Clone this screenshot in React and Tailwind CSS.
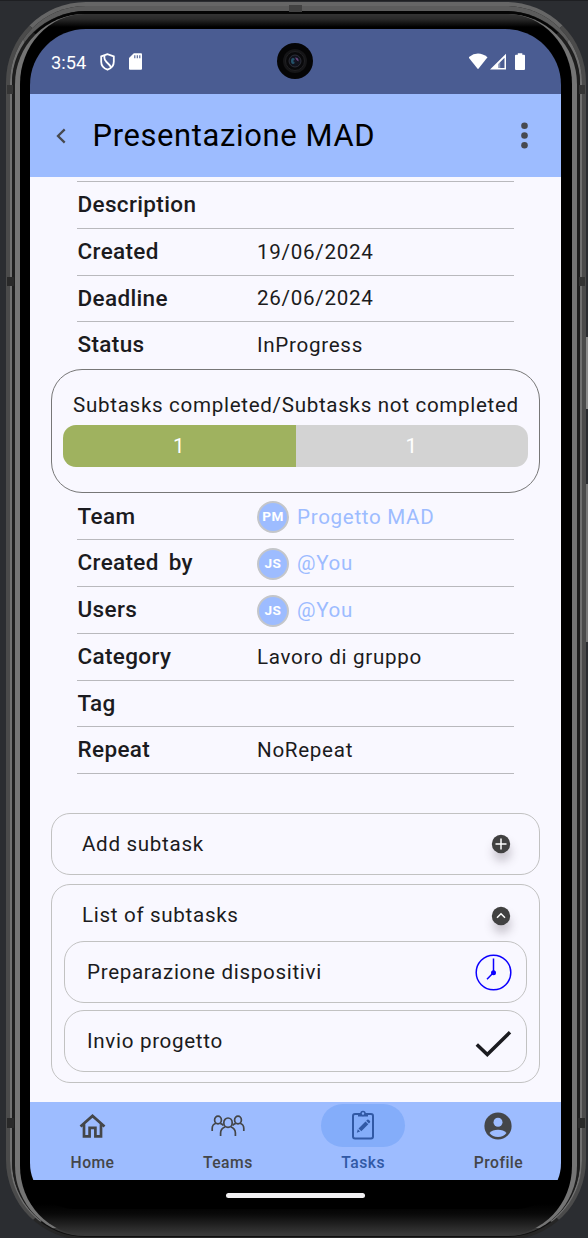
const ROBOTO = "font-['Roboto','Noto_Sans',sans-serif]";

function Avatar({ text }) {
  return (
    <span className="flex h-8 w-8 shrink-0 items-center justify-center rounded-full border-2 border-[#c4c6ca] bg-[#9dbcff] text-[13.6px] font-bold leading-none tracking-[0.5px] text-white">
      {text}
    </span>
  );
}

function Row({ label, value, avatar, last }) {
  return (
    <div className={`flex h-[46.75px] items-center border-b ${last ? 'border-transparent' : 'border-[#b9b9bd]'}`}>
      <div className="w-[180px] shrink-0 pl-[0.5px] text-[22.5px] font-medium tracking-[0.35px] text-[#1b1b20] [word-spacing:4px]">{label}</div>
      {avatar ? (
        <div className="flex items-center gap-[8px] pt-[1.5px] text-[20.6px] tracking-[0.68px] text-[#9dbcff]">
          <Avatar text={avatar} />
          <span>{value}</span>
        </div>
      ) : (
        <div className="pt-[1px] text-[20.6px] tracking-[0.7px] text-[#1b1b20]">{value}</div>
      )}
    </div>
  );
}

function StatusBar() {
  return (
    <div className="flex h-[65px] shrink-0 items-center bg-[#4a5c92] pl-[21px] pr-[36px] text-white">
      <span className="w-[49px] pt-[2px] text-[18.3px]">3:54</span>
      <svg className="h-[18px] w-[15px]" viewBox="0 0 15 18" fill="none" stroke="white" strokeWidth="1.8">
        <path d="M7.5 1.2 1.2 3.5v5.2c0 3.700 2.600 6.600 6.300 8 3.700-1.400 6.300-4.300 6.300-8V3.500Z" />
        <path d="M4.400 2.500v2.500c0 1.600.8 2.700 2.100 4l3 3c1 1 1.300 1.700 1.300 3" />
      </svg>
      <svg className="ml-[14px] h-[17px] w-[13px]" viewBox="0 0 13 17">
        <path fill="white" d="M4.800.2H12q1 0 1 1v14.500q0 1-1 1H1q-1 0-1-1V5Z" />
        <path stroke="#4a5c92" strokeWidth="1.100" d="M5.800 2.200v3M8.300 2.200v3M10.800 2.200v3" />
      </svg>
      <div className="flex flex-1 justify-center pb-[1px] pr-[21px]">
        <div className="flex h-[36px] w-[36px] items-center justify-center rounded-full bg-[#050506]">
          <svg className="h-[28px] w-[28px]" viewBox="0 0 28 28">
            <circle cx="14" cy="14" r="12" fill="#151517" />
            <circle cx="14" cy="14" r="9.500" fill="#09090b" stroke="#202023" />
            <circle cx="14" cy="14" r="6" fill="#11131d" stroke="#343640" strokeWidth=".8" />
            <ellipse cx="12" cy="14" rx="2" ry="3" fill="#24536a" />
            <path d="M14 10.500q4 0 3.500 4l-2-1.500Z" fill="#69447d" />
            <circle cx="14" cy="14" r="1.600" fill="#171628" />
          </svg>
        </div>
      </div>
      <svg className="h-[18px] w-[56px]" viewBox="0 0 56 18" fill="white">
        <path d="M-.5 4.300Q9-3.200 18.500 4.300L9 16.300Z" />
        <path fillRule="evenodd" d="M37 .8V16.600H21ZM35.500 4.800 29.300 11v4.100h6.200Z" />
        <path d="M29.300 9.500h2v5.600h-2z" opacity=".35" />
        <path d="M48.800.2h4.500v1.500h1.700q1 0 1 1v13.400q0 1-1 1h-8q-1 0-1-1V2.700q0-1 1-1h1.800Z" />
      </svg>
    </div>
  );
}

function Header() {
  return (
    <header className="flex h-[83px] shrink-0 items-center bg-[#9dbcff] pl-[26px] pr-[33px]">
      <svg className="h-[16px] w-[10px]" viewBox="0 0 10 16" fill="none" stroke="#47494f" strokeWidth="2.300">
        <path d="M8.700 1.400 2 8l6.700 6.600" />
      </svg>
      <h1 className="ml-[26.5px] flex-1 pt-[2px] text-[30.900px] tracking-[0.650px] text-black">Presentazione MAD</h1>
      <svg className="h-[27px] w-[7px]" viewBox="0 0 7 27" fill="#47494f">
        <circle cx="3.500" cy="3.700" r="3.300" />
        <circle cx="3.500" cy="13.500" r="3.300" />
        <circle cx="3.500" cy="23.200" r="3.300" />
      </svg>
    </header>
  );
}

function RoundIcon({ children }) {
  return (
    <svg
      className="h-[18px] w-[18px] overflow-visible drop-shadow-[1px_8px_5px_rgba(30,20,30,0.220)]"
      viewBox="0 0 18 18"
      fill="none"
      stroke="white"
      strokeWidth="1.500"
    >
      <circle cx="9" cy="9" r="9.200" fill="#414141" stroke="none" />
      {children}
    </svg>
  );
}

function NavItem({ label, active, children }) {
  return (
    <div className={`flex w-[125px] flex-col items-center ${active ? 'text-[#3159a5]' : 'text-[#444649]'}`}>
      <div className={`mt-[2px] flex h-[43px] w-[84px] items-center justify-center rounded-full ${active ? 'bg-[#84adfa] pb-[2px]' : ''}`}>
        {children}
      </div>
      <span className="mt-[5px] text-[15.700px] font-medium leading-[22px] tracking-[0.450px]">{label}</span>
    </div>
  );
}

function BottomNav() {
  return (
    <nav className="flex h-[78px] shrink-0 justify-between bg-[#9dbcff]">
      <NavItem label="Home">
        <svg className="h-[24px] w-[27px]" viewBox="0 0 27 24" fill="none" stroke="currentColor" strokeWidth="2.700">
          <path d="M1.500 12.400 13.500 1.900l12 10.500M5 10v12.300h5.600v-8.500h5.800v8.500H22V10" />
        </svg>
      </NavItem>
      <NavItem label="Teams">
        <svg className="h-[22px] w-[34px]" viewBox="0 0 34 22" fill="none" stroke="currentColor" strokeWidth="1.700">
          <ellipse cx="7" cy="5" rx="3.400" ry="3.900" />
          <ellipse cx="27" cy="5" rx="3.400" ry="3.900" />
          <ellipse cx="17" cy="7.700" rx="4.200" ry="4.700" />
          <path d="M1.200 16v-2.500q0-4 3.700-5.200M9.200 8.300q2.200.5 3.300 2.200M32.800 16v-2.500q0-4-3.700-5.200M24.800 8.300q-2.200.5-3.300 2.200M9.600 21v-3q0-4.500 4.700-6.300M24.400 21v-3q0-4.500-4.700-6.300" />
        </svg>
      </NavItem>
      <NavItem label="Tasks" active>
        <svg className="h-[30px] w-[24px]" viewBox="0 0 24 30" fill="none" stroke="currentColor" strokeWidth="2">
          <rect x="2" y="4" width="20" height="24.500" rx="2" />
          <path d="M7 3.500h2.500a2.600 2.600 0 0 1 5 0H17v3H7Z" fill="currentColor" stroke="none" />
          <circle cx="12" cy="3.500" r="2" fill="#84adfa" strokeWidth="1.500" />
          <path d="m7.500 18.500 7-7 2.800 2.800-7 7ZM15.200 10.800l1-1q.9-.7 1.800.2l.9.900q.8.900 0 1.700l-1 1ZM6.800 19.200l2.300 2.300-3.300 1.200Z" fill="currentColor" stroke="none" />
        </svg>
      </NavItem>
      <NavItem label="Profile">
        <svg className="h-[28px] w-[28px]" viewBox="0 0 28 28">
          <circle cx="14" cy="14" r="13.600" fill="currentColor" />
          <circle cx="14" cy="10.300" r="4.500" fill="#9dbcff" />
          <path d="M5.500 21q3-3.200 8.500-3.200t8.500 3.200q-3 3.900-8.500 3.900T5.500 21Z" fill="#9dbcff" />
        </svg>
      </NavItem>
    </nav>
  );
}

function Details() {
  return (
    <main className="flex h-[925px] shrink-0 flex-col bg-[#f9f8ff] px-[21px] pt-[4px] text-[20.600px] tracking-[0.680px] text-[#1b1b20]">
      <section className="mx-[26px] h-[187.500px] border-t border-[#b9b9bd]">
        <Row label="Description" />
        <Row label="Created" value="19/06/2024" />
        <Row label="Deadline" value="26/06/2024" />
        <Row label="Status" value="InProgress" last />
      </section>
      <section className="flex h-[124px] shrink-0 flex-col rounded-[31px] border border-[#777777] px-[11px] pt-[20px]">
        <div className="pl-[1px] text-center leading-[30px] whitespace-nowrap">Subtasks completed/Subtasks not completed</div>
        <div className="mt-[5.500px] flex h-[42px] overflow-hidden rounded-[13px] text-center leading-[43px] text-white">
          <div className="flex-1 bg-[#9fb25f]">1</div>
          <div className="flex-1 bg-[#d3d3d3]">1</div>
        </div>
      </section>
      <section className="mx-[26px] mt-[1px]">
        <Row label="Team" value="Progetto MAD" avatar="PM" />
        <Row label="Created by" value="@You" avatar="JS" />
        <Row label="Users" value="@You" avatar="JS" />
        <Row label="Category" value="Lavoro di gruppo" />
        <Row label="Tag" />
        <Row label="Repeat" value="NoRepeat" />
      </section>
      <section className="mt-[38.5px] flex h-[62px] shrink-0 items-center justify-between rounded-[19px] border border-[#c2c2c2] pl-[30px] pr-[29px] pt-[1px]">
        <span>Add subtask</span>
        <RoundIcon><path d="M9 3.500v11M3.500 9h11" /></RoundIcon>
      </section>
      <section className="mt-[9px] flex h-[199px] shrink-0 flex-col rounded-[19px] border border-[#c2c2c2] px-[12px]">
        <div className="flex h-[61px] items-center justify-between pl-[18px] pr-[17px] pt-[1px]">
          <span>List of subtasks</span>
          <RoundIcon><path d="m5 10.700 4-3.900 4 3.900" /></RoundIcon>
        </div>
        <div className="mt-[-5px] flex h-[62px] shrink-0 items-center justify-between rounded-[20px] border border-[#c2c2c2] pl-[22px] pr-[14px] pt-[1.5px]">
          <span>Preparazione dispositivi</span>
          <svg className="h-[37px] w-[37px]" viewBox="0 0 37 37" fill="none" stroke="#0d00ff" strokeWidth="1.500">
            <circle cx="18.500" cy="18.500" r="17.300" />
            <path d="M18.500 18.500v-14M18.500 18.500l-6.500 6.700" />
            <circle cx="18.500" cy="18.700" r="2.500" fill="#0d00ff" stroke="none" />
          </svg>
        </div>
        <div className="mt-[7px] flex h-[62px] shrink-0 items-center justify-between rounded-[20px] border border-[#c2c2c2] pl-[22px] pr-[14px] pt-[1.5px]">
          <span>Invio progetto</span>
          <svg className="mt-[5px] h-[28px] w-[37px]" viewBox="0 0 37 28" fill="none" stroke="#1b1b20" strokeWidth="3.500">
            <path d="m1.800 14.500 10.500 10L35 2.200" />
          </svg>
        </div>
      </section>
    </main>
  );
}

export default function App() {
  return (
    <div className={`relative flex h-[1238px] w-[588px] overflow-hidden border-t border-[#1e1f22] bg-[#2b2d31] pl-[6px] pt-[1px] ${ROBOTO}`}>
      <div className="h-[1238px] w-[580px] shrink-0 rounded-[80px] border-[4px] border-b-[3px] border-x-[#4b4b4b] border-t-[#666666] border-b-[#262626] bg-[#1d1d1d]">
        <div className="h-full rounded-[76px] border-x-[2px] border-t-[5px] border-b-[1px] border-x-[#707070] border-t-[#5c5c5c] border-b-[#111111]">
          <div className="h-full rounded-[74px] border-x-[3px] border-t-[3px] border-x-[#1e1e1e] border-t-[#050505] border-b-[#050505]">
            <div className="h-full rounded-[70px] border-x-[5px] border-b-[1px] border-x-[#747474] border-b-[#3a3a3a] bg-[linear-gradient(to_bottom,#343434_0px,#2a2a2a_5px,#000_13px,#000_1190px,#090909_1200px,#383838_1220px)] pl-[10px] pr-[11px] pt-[15px]">
              <div className="flex h-[1180px] w-[531px] flex-col overflow-hidden rounded-t-[56px] rounded-b-[46px] bg-black">
                <StatusBar />
                <Header />
                <Details />
                <BottomNav />
                <div className="flex h-[29px] items-center justify-center pt-[2px]">
                  <div className="h-[5px] w-[139px] rounded-full bg-[#f1f0f2]" />
                </div>
              </div>
            </div>
          </div>
        </div>
      </div>
      <div className="flex w-[2px] flex-col">
        <div className="mt-[335px] h-[72px] bg-[#8a8a8a]" />
        <div className="mt-[75px] h-[158px] bg-[#777777]" />
      </div>
      <div className="absolute left-[7px] top-[276px] h-[9px] w-[7px] bg-[#292929]" />
      <div className="absolute left-[579px] top-[276px] h-[9px] w-[6px] bg-[#333333]" />
      <div className="absolute left-[7px] top-[84px] h-[9px] w-[6px] bg-[#353535]" />
      <div className="absolute left-[579px] top-[84px] h-[9px] w-[6px] bg-[#353535]" />
      <div className="absolute left-[7px] top-[1117px] h-[10px] w-[7px] bg-[#292929]" />
      <div className="absolute left-[578px] top-[1117px] h-[10px] w-[7px] bg-[#292929]" />
      <div className="absolute left-[289px] top-[4px] h-[7px] w-[13px] bg-[#424242]" />
    </div>
  );
}
